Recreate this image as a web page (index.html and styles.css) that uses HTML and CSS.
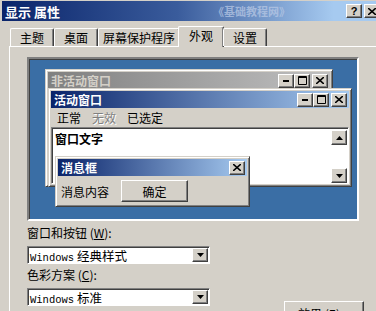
FILE: index.html
```html
<!DOCTYPE html>
<html>
  <head>
    <link rel="stylesheet" href="styles.css">
    <title>显示 属性</title>
  </head>
  <body>
    <div class="dialog">
      <div class="caption">
        <span class="caption-title">显示 属性</span>
        <span class="caption-mark">《基础教程网》</span>
        <span class="cap-btn help-btn">?</span>
        <span class="cap-btn close-btn">
          <svg width="8" height="7" viewBox="0 0 8 7"><path d="M0 0L8 7M8 0L0 7" stroke="#000" stroke-width="1.6"/></svg>
        </span>
      </div>

      <div class="tabs">
        <div class="tab">主题</div>
        <div class="tab">桌面</div>
        <div class="tab">屏幕保护程序</div>
        <div class="tab tab-active">外观</div>
        <div class="tab">设置</div>
      </div>

      <div class="panel">
        <div class="preview">
          <div class="win win-inactive">
            <div class="win-title title-inactive">
              <span>非活动窗口</span>
              <div class="win-buttons">
                <span class="cap-btn"><svg width="6" height="2"><rect width="6" height="2" fill="#000"/></svg></span>
                <span class="cap-btn"><svg width="9" height="9"><path d="M0.5 0.5h8v8h-8z M0 1.5h9" fill="none" stroke="#000"/></svg></span>
                <span class="cap-btn gap"><svg width="8" height="7" viewBox="0 0 8 7"><path d="M0 0L8 7M8 0L0 7" stroke="#000" stroke-width="1.6"/></svg></span>
              </div>
            </div>
          </div>

          <div class="win win-active">
            <div class="win-title title-active">
              <span>活动窗口</span>
              <div class="win-buttons">
                <span class="cap-btn"><svg width="6" height="2"><rect width="6" height="2" fill="#000"/></svg></span>
                <span class="cap-btn"><svg width="9" height="9"><path d="M0.5 0.5h8v8h-8z M0 1.5h9" fill="none" stroke="#000"/></svg></span>
                <span class="cap-btn gap"><svg width="8" height="7" viewBox="0 0 8 7"><path d="M0 0L8 7M8 0L0 7" stroke="#000" stroke-width="1.6"/></svg></span>
              </div>
            </div>
            <div class="menu-row">
              <span>正常</span>
              <span class="menu-disabled">无效</span>
              <span>已选定</span>
            </div>
            <div class="text-area">
              <div class="text-body">窗口文字</div>
              <div class="scrollbar">
                <span class="cap-btn scroll-btn"><svg width="7" height="4"><path d="M3.5 0L7 4H0z" fill="#000"/></svg></span>
                <span class="cap-btn scroll-btn"><svg width="7" height="4"><path d="M0 0H7L3.5 4z" fill="#000"/></svg></span>
              </div>
            </div>
          </div>

          <div class="win win-message">
            <div class="win-title title-active">
              <span>消息框</span>
              <div class="win-buttons">
                <span class="cap-btn"><svg width="8" height="7" viewBox="0 0 8 7"><path d="M0 0L8 7M8 0L0 7" stroke="#000" stroke-width="1.6"/></svg></span>
              </div>
            </div>
            <div class="message-body">
              <span>消息内容</span>
              <span class="push-btn ok-btn">确定</span>
            </div>
          </div>
        </div>

        <div class="options">
          <div class="option-fields">
            <div class="field-label">窗口和按钮 (<u>W</u>):</div>
            <div class="combo">
              <span class="combo-text"><span class="latin">Windows</span> 经典样式</span>
              <span class="cap-btn combo-btn"><svg width="7" height="4"><path d="M0 0H7L3.5 4z" fill="#000"/></svg></span>
            </div>
            <div class="field-label">色彩方案 (<u>C</u>):</div>
            <div class="combo">
              <span class="combo-text"><span class="latin">Windows</span> 标准</span>
              <span class="cap-btn combo-btn"><svg width="7" height="4"><path d="M0 0H7L3.5 4z" fill="#000"/></svg></span>
            </div>
          </div>
          <div class="option-side">
            <span class="push-btn effects-btn">效果 (<u>E</u>)...</span>
          </div>
        </div>
      </div>
    </div>
  </body>
</html>
```

FILE: styles.css
```css
body {
  margin: 0;
  width: 376px;
  height: 311px;
  overflow: hidden;
  background-color: #d4d0c8;
  font-family: "Noto Sans CJK SC", "Liberation Sans", sans-serif;
  font-size: 12px;
  color: #000;
}

.dialog {
  width: 390px;
  padding: 1px 0 0 2px;
}

/* title bar */

.caption {
  display: flex;
  align-items: center;
  height: 20px;
  padding: 0 0 0 3px;
  background: linear-gradient(to right, #0a246a 0%, #3a5c9c 45%, #a6caf0 85%);
  color: #fff;
}

.caption-title {
  font-weight: bold;
  font-size: 13px;
}

.caption-mark {
  margin-left: 153px;
  color: #bccbe6;
  font-size: 11px;
  font-weight: bold;
  opacity: 0.7;
}

.cap-btn {
  display: inline-flex;
  align-items: center;
  justify-content: center;
  width: 14px;
  height: 12px;
  background-color: #d4d0c8;
  border: 1px solid;
  border-color: #fff #404040 #404040 #fff;
  box-shadow: inset -1px -1px #808080;
  color: #000;
}

.help-btn {
  margin-left: auto;
  font-family: "Liberation Sans", sans-serif;
  font-weight: bold;
  font-size: 11px;
  line-height: 12px;
}

.close-btn {
  margin-left: 2px;
  margin-right: 12px;
}

/* tabs */

.tabs {
  display: flex;
  align-items: flex-end;
  height: 25px;
  padding-left: 8px;
  position: relative;
  z-index: 1;
}

.tab {
  min-width: 34px;
  height: 17px;
  padding: 0 4px;
  line-height: 17px;
  text-align: center;
  border: 1px solid #fff;
  border-bottom: none;
  border-right-color: #404040;
  box-shadow: inset -1px 0 #808080;
  border-radius: 2px 2px 0 0;
}

.tab-active {
  height: 19px;
  margin: 0 -1px -1px -2px;
  padding: 0 5px 1px;
  background-color: #d4d0c8;
}

/* tab page */

.panel {
  margin-left: 7px;
  border-top: 1px solid #fff;
  border-left: 1px solid #fff;
  padding: 10px 0 0 17px;
}

.preview {
  position: relative;
  width: 328px;
  height: 160px;
  background-color: #3a6ea5;
  border: 2px solid;
  border-color: #808080 #fff #fff #808080;
  box-shadow: inset 1px 1px #404040;
}

.win {
  position: absolute;
  display: flex;
  flex-direction: column;
  box-sizing: border-box;
  background-color: #d4d0c8;
  border: 1px solid;
  border-color: #d4d0c8 #404040 #404040 #d4d0c8;
  box-shadow: inset 1px 1px #fff, inset -1px -1px #808080;
  padding: 2px;
}

.win-inactive {
  left: 16px;
  top: 10px;
  width: 288px;
  height: 118px;
}

.win-active {
  left: 19px;
  top: 29px;
  width: 304px;
  height: 99px;
}

.win-message {
  left: 26px;
  top: 97px;
  width: 195px;
  height: 51px;
}

.win-title {
  display: flex;
  align-items: center;
  height: 17px;
  padding: 0 2px 0 3px;
  font-weight: bold;
  font-size: 12px;
}

.title-inactive {
  background: linear-gradient(to right, #808080, #c0c0c0);
  color: #d4d0c8;
}

.title-active {
  background: linear-gradient(to right, #0a246a, #a6caf0);
  color: #fff;
}

.win-buttons {
  display: flex;
  margin-left: auto;
}

.win-buttons .gap {
  margin-left: 2px;
}

.menu-row {
  display: flex;
  gap: 11px;
  height: 19px;
  align-items: center;
  padding-left: 6px;
}

.menu-disabled {
  color: #808080;
  text-shadow: 1px 1px #fff;
}

.text-area {
  display: flex;
  flex: 1;
  background-color: #fff;
  border: 1px solid;
  border-color: #808080 #fff #fff #808080;
  box-shadow: inset 1px 1px #404040;
}

.text-body {
  flex: 1;
  padding: 2px 0 0 3px;
  font-weight: bold;
}

.scrollbar {
  display: flex;
  flex-direction: column;
  justify-content: space-between;
  padding: 2px 1px 0 0;
}

.scroll-btn {
  height: 13px;
}

.message-body {
  display: flex;
  align-items: center;
  padding: 4px 0 0 3px;
}

.push-btn {
  display: inline-flex;
  align-items: center;
  justify-content: center;
  background-color: #d4d0c8;
  border: 1px solid;
  border-color: #fff #404040 #404040 #fff;
  box-shadow: inset -1px -1px #808080;
}

.ok-btn {
  width: 65px;
  height: 20px;
  margin-left: 12px;
}

/* lower options */

.options {
  display: flex;
}

.option-fields {
  width: 183px;
  padding-top: 4px;
}

.field-label {
  height: 16px;
  line-height: 16px;
  margin-bottom: 5px;
}

.combo {
  display: flex;
  align-items: center;
  height: 14px;
  padding: 1px 1px 1px 2px;
  background-color: #fff;
  border: 1px solid;
  border-color: #808080 #fff #fff #808080;
  box-shadow: inset 1px 1px #404040;
  margin-bottom: 3px;
}

.combo-text {
  flex: 1;
  font-size: 12.5px;
}

.latin {
  font-family: "Liberation Mono", monospace;
  font-size: 10.5px;
}

.combo-btn {
  height: 12px;
}

.option-side {
  padding: 80px 0 0 74px;
}

.effects-btn {
  width: 78px;
  height: 22px;
}
```
